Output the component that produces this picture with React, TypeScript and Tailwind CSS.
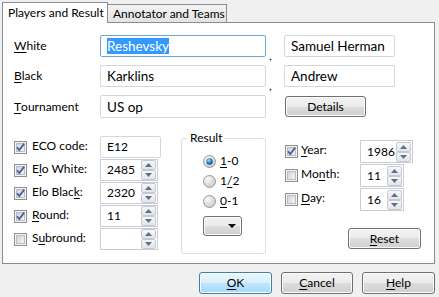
import React from "react";

const Check = ({ checked }: { checked?: boolean }) => (
  <svg width="13" height="13" viewBox="0 0 13 13" className="shrink-0">
    <defs>
      <linearGradient id="cbg" x1="0" y1="0" x2="1" y2="1">
        <stop offset="0" stopColor="#cdd1d6" />
        <stop offset="1" stopColor="#f7f7f7" />
      </linearGradient>
    </defs>
    <rect x="0.5" y="0.5" width="12" height="12" fill="#f4f4f4" stroke="#8e8f8f" />
    <rect x="2.5" y="2.5" width="8" height="8" fill="url(#cbg)" stroke="#b9bec6" />
    {checked && <path d="M3 6.2 L5.3 9 L10.2 2.6" fill="none" stroke="#4a5f97" strokeWidth="1.8" />}
  </svg>
);

const Radio = ({ checked }: { checked?: boolean }) => (
  <svg width="13" height="13" viewBox="0 0 13 13" className="shrink-0">
    <defs>
      <radialGradient id="rg" cx="0.35" cy="0.3" r="0.8">
        <stop offset="0" stopColor="#fbfbfb" />
        <stop offset="1" stopColor="#c4c4c4" />
      </radialGradient>
      <radialGradient id="rgs" cx="0.4" cy="0.35" r="0.7">
        <stop offset="0" stopColor="#9fe4ff" />
        <stop offset="0.5" stopColor="#2a8bd0" />
        <stop offset="1" stopColor="#0f3d6e" />
      </radialGradient>
    </defs>
    <circle cx="6.5" cy="6.5" r="6" fill="url(#rg)" stroke="#9a9a9a" />
    {checked && <circle cx="6.5" cy="6.5" r="3.2" fill="url(#rgs)" />}
  </svg>
);

const SpinBtn = ({ up }: { up?: boolean }) => (
  <div className="flex h-[10px] w-[15px] items-center justify-center rounded-[2px] border border-[#c3c9d1] bg-[linear-gradient(#f6f7f8,#e2e5e9)]">
    <svg width="7" height="4" viewBox="0 0 7 4">
      <path d={up ? "M0 4 L3.5 0 L7 4 Z" : "M0 0 L3.5 4 L7 0 Z"} fill="#5c6f93" />
    </svg>
  </div>
);

const Spin = ({ value, w, h }: { value: string; w: string; h: string }) => (
  <div className={`flex items-center border border-[#c9ced6] bg-white ${w} ${h}`}>
    <span className="flex-1 pl-[6px]">{value}</span>
    <div className="flex flex-col pr-[1px]">
      <SpinBtn up />
      <SpinBtn />
    </div>
  </div>
);

const Btn = ({ children, className, primary }: { children: React.ReactNode; className: string; primary?: boolean }) => (
  <div
    className={`flex items-center justify-center rounded-[3px] border shadow-[inset_0_0_0_1px_#fcfcfc] ${
      primary
        ? "border-[#3c7fb1] bg-[linear-gradient(#eaf6fd_0%,#d9f0fc_50%,#bee6fd_50%,#a7d9f5_100%)]"
        : "border-[#707070] bg-[linear-gradient(#f2f2f2_0%,#ebebeb_50%,#dddddd_50%,#cfcfcf_100%)]"
    } ${className}`}
  >
    {children}
  </div>
);

const U = ({ children }: { children: React.ReactNode }) => <span className="underline underline-offset-[2px]">{children}</span>;

const TextBox = ({ value, focused, selected }: { value: string; focused?: boolean; selected?: boolean }) => (
  <div
    className={`flex items-center rounded-[2px] border pl-[6px] text-[13.5px] ${
      focused ? "border-[#6ea6dc]" : "border-[#d3d8df]"
    }`}
  >
    <span className={selected ? "bg-[#3399ff] leading-[16px] text-white" : "leading-[16px]"}>{value}</span>
  </div>
);

const LeftRow = ({ label, checked, children }: { label: React.ReactNode; checked?: boolean; children: React.ReactNode }) => (
  <div className="flex items-center">
    <div className="flex w-[86px] items-center gap-[5px]">
      <Check checked={checked} />
      <span className="mt-[-3px]">{label}</span>
    </div>
    {children}
  </div>
);

const RightRow = ({ label, checked, children }: { label: React.ReactNode; checked?: boolean; children: React.ReactNode }) => (
  <div className="flex items-center">
    <div className="flex w-[75px] items-center gap-[3px]">
      <Check checked={checked} />
      <span className="mt-[-3px]">{label}</span>
    </div>
    {children}
  </div>
);

export default function App() {
  return (
    <div className="h-[297px] w-[439px] overflow-hidden whitespace-nowrap bg-[#f0f0f0] font-['Lato',sans-serif] text-[12px] leading-none text-black">
      {/* tabs */}
      <div className="flex h-[22px] items-end pl-[2px]">
        <div className="relative z-10 mb-[-1px] flex h-[21px] w-[106px] items-center border border-b-0 border-[#898c95] bg-white pb-[1px] pl-[5px]">
          Players and Result
        </div>
        <div className="flex h-[18px] w-[119px] items-center border border-b-0 border-l-0 border-[#898c95] bg-[linear-gradient(#f3f3f3,#e3e3e3)] pl-[5px]">
          Annotator and Teams
        </div>
      </div>

      {/* panel */}
      <div className="ml-[2px] h-[242px] w-[433px] border border-[#898c95] bg-white">
        <div className="grid grid-cols-[86px_166px_18px_111px] grid-rows-[22px_22px_23px] gap-y-[8px] pl-[11px] pt-[12px]">
          <div className="flex items-center"><U>W</U>hite</div>
          <TextBox value="Reshevsky" focused selected />
          <div className="flex items-end pl-[3px]"><span className="mb-[-5px]">,</span></div>
          <TextBox value="Samuel Herman" />

          <div className="flex items-center"><U>B</U>lack</div>
          <TextBox value="Karklins" />
          <div className="flex items-end pl-[3px]"><span className="mb-[-5px]">,</span></div>
          <TextBox value="Andrew" />

          <div className="flex items-center"><U>T</U>ournament</div>
          <TextBox value="US op" />
          <div />
          <div className="flex items-center pl-[1px]">
            <Btn className="h-[21px] w-[81px]">Details</Btn>
          </div>
        </div>

        <div className="mt-[12px] flex items-start pl-[11px]">
          {/* left column */}
          <div className="mt-[6px] flex w-[150px] flex-col gap-[1px]">
            <LeftRow label="ECO code:" checked>
              <div className="flex h-[22px] w-[61px] items-center rounded-[2px] border border-[#d3d8df] pl-[6px]">E12</div>
            </LeftRow>
            <LeftRow label={<>E<U>l</U>o White:</>} checked>
              <Spin value="2485" w="w-[58px]" h="h-[22px]" />
            </LeftRow>
            <LeftRow label={<>Elo Blac<U>k</U>:</>} checked>
              <Spin value="2320" w="w-[58px]" h="h-[22px]" />
            </LeftRow>
            <LeftRow label={<><U>R</U>ound:</>} checked>
              <Spin value="11" w="w-[58px]" h="h-[22px]" />
            </LeftRow>
            <LeftRow label={<>S<U>u</U>bround:</>}>
              <Spin value="" w="w-[58px]" h="h-[22px]" />
            </LeftRow>
          </div>

          {/* result group */}
          <fieldset className="ml-[17px] h-[124px] w-[85px] rounded-[3px] border border-[#d5dfe5]">
            <legend className="ml-[6px] px-[2px] leading-[16px]">Result</legend>
            <div className="flex flex-col items-start pl-[21px] pt-[5px]">
              <div className="flex h-[20px] items-center gap-[4px]"><Radio checked /><span><U>1</U>-0</span></div>
              <div className="flex h-[20px] items-center gap-[4px]"><Radio /><span>1<U>/</U>2</span></div>
              <div className="flex h-[20px] items-center gap-[4px]"><Radio /><span><U>0</U>-1</span></div>
              <Btn className="mt-[5px] h-[20px] w-[39px] !justify-end pr-[5px]">
                <svg width="8" height="4" viewBox="0 0 8 4"><path d="M0 0 L8 0 L4 4 Z" fill="#000" /></svg>
              </Btn>
            </div>
          </fieldset>

          {/* right column */}
          <div className="ml-[19px] mt-[10px] flex w-[136px] flex-col gap-[1px]">
            <RightRow label={<><U>Y</U>ear:</>} checked>
              <Spin value="1986" w="w-[53px]" h="h-[23px]" />
            </RightRow>
            <RightRow label={<>Mo<U>n</U>th:</>}>
              <Spin value="11" w="w-[44px]" h="h-[23px]" />
            </RightRow>
            <RightRow label={<><U>D</U>ay:</>}>
              <Spin value="16" w="w-[44px]" h="h-[23px]" />
            </RightRow>
            <Btn className="mt-[16px] h-[21px] w-[73px] self-end"><span><U>R</U>eset</span></Btn>
          </div>
        </div>
      </div>

      {/* dialog buttons */}
      <div className="mt-[8px] flex justify-end gap-[9px] pr-[4px]">
        <Btn primary className="h-[22px] w-[73px]"><span><U>O</U>K</span></Btn>
        <Btn className="h-[22px] w-[72px]"><span><U>C</U>ancel</span></Btn>
        <Btn className="h-[22px] w-[73px]"><span><U>H</U>elp</span></Btn>
      </div>
    </div>
  );
}
